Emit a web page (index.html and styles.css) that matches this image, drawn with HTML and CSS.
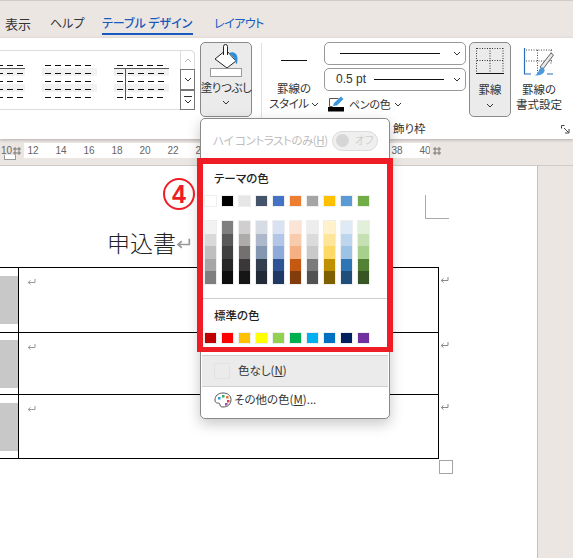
FILE: index.html
```html
<!DOCTYPE html>
<html lang="ja">
<head>
    <meta charset="UTF-8">
    <meta name="viewport" content="width=device-width, initial-scale=1.0">
    <title>テーブル デザイン</title>
    <link rel="stylesheet" href="styles.css">
</head>
<body>
    <svg class="defs" width="0" height="0">
        <symbol id="para" viewBox="0 0 9 9">
            <path d="M8 1v3.5H1.5M3.5 2.500L1.200 4.500l2.300 2" fill="none" stroke="currentColor" stroke-width="1"/>
        </symbol>
        <symbol id="chev" viewBox="0 0 8 5">
            <path d="M1 1l3 3 3-3" fill="none" stroke="currentColor" stroke-width="1"/>
        </symbol>
    </svg>

    <div class="tabs">
        <span class="tab tab-view">表示</span>
        <span class="tab tab-help">ヘルプ</span>
        <span class="tab tab-design">テーブル デザイン</span>
        <span class="tab tab-layout">レイアウト</span>
    </div>

    <div class="ribbon">
        <div class="tools">
            <div class="gallery">
                <svg class="gallery-art" width="180" height="58" viewBox="0 50 180 58">
                    <g fill="#f2f2f2">
                        <rect x="0" y="67" width="25" height="8"/><rect x="0" y="83" width="25" height="8"/>
                        <rect x="42" y="67" width="55" height="8"/><rect x="42" y="83" width="55" height="8"/>
                        <rect x="114" y="67" width="55" height="8"/><rect x="114" y="83" width="55" height="8"/>
                    </g>
                    <path d="M0 67.500h25M114 67.500h55M125.500 67v32" stroke="#555" fill="none"/>
                    <path d="M0 64.500h24M0 72.500h24M0 80.500h24M0 88.500h24M0 96.500h24" stroke="#111" stroke-dasharray="6 4" stroke-dashoffset="3" fill="none"/>
                    <path d="M45 64.500h50M45 72.500h50M45 80.500h50M45 88.500h50M45 96.500h50" stroke="#111" stroke-dasharray="6 4" fill="none"/>
                    <path d="M117 64.500h50M117 96.500h50M117 72.500h6M117 80.500h6M117 88.500h6M128 72.500h40M128 80.500h40M128 88.500h40" stroke="#111" stroke-dasharray="6 4" fill="none"/>
                </svg>
                <div class="scroller">
                    <div class="scroll-btn scroll-up"><svg class="chev"><use href="#chev"/></svg></div>
                    <div class="scroll-btn"><svg class="chev"><use href="#chev"/></svg></div>
                    <div class="scroll-btn scroll-more"><span class="more-bar"></span><svg class="chev"><use href="#chev"/></svg></div>
                </div>
            </div>

            <div class="big-btn big-fill is-open">
                <svg class="fill-icon" width="26" height="24" viewBox="0 0 26 24">
                    <path d="M2 15l11-9 10 11-9 7z" fill="#fff" stroke="#222" stroke-width="1"/>
                    <path d="M10.500 11V2.500a2 2 0 0 1 4 0V11" fill="#fff" stroke="#222" stroke-width="1"/>
                    <path d="M16 9c4-2 8 0 8.500 5 0 3-.3 6-1 6s-1-3-2-5c-1-2-3-4-5.500-6z" fill="#2f8fd8"/>
                </svg>
                <span class="fill-bar"></span>
                <span class="btn-label btn-label-tight">塗りつぶし</span>
                <svg class="chev"><use href="#chev"/></svg>
            </div>

            <div class="sep"></div>

            <div class="big-btn big-style">
                <span class="style-line"></span>
                <span class="btn-label">罫線の</span>
                <span class="btn-label btn-label-tight">スタイル <svg class="chev chev-inline"><use href="#chev"/></svg></span>
            </div>

            <div class="combos">
                <div class="combo"><span class="combo-line combo-line-long"></span><svg class="chev"><use href="#chev"/></svg></div>
                <div class="combo"><span class="combo-text">0.5 pt</span><span class="combo-line"></span><svg class="chev"><use href="#chev"/></svg></div>
                <div class="pen">
                    <svg width="17" height="16" viewBox="0 0 17 16">
                        <path d="M1.500 10.500v-8h9M1.500 10.500h3" fill="none" stroke="#555"/>
                        <path d="M5 10l1-3 7-6.500 2.500 2.500L9 9.500z" fill="#3b97de"/>
                        <rect x="0" y="11" width="16" height="4.500" fill="#000"/>
                    </svg>
                    <span class="btn-label pen-label">ペンの色</span>
                    <svg class="chev"><use href="#chev"/></svg>
                </div>
            </div>

            <div class="big-btn big-borders is-open">
                <svg class="borders-icon" width="28" height="28" viewBox="0 0 28 28">
                    <path d="M1 1.500h26M1 13.500h26M.5 1v25M14 1v25M27 1v25" stroke="#333" stroke-dasharray="1 1.500" fill="none"/>
                    <path d="M0 26.500h28" stroke="#111" stroke-width="1"/>
                </svg>
                <span class="btn-label">罫線</span>
                <svg class="chev"><use href="#chev"/></svg>
            </div>

            <div class="big-btn big-format">
                <svg class="format-icon" width="32" height="30" viewBox="0 0 32 30">
                    <path d="M3 3h27M3 14h27M14.500 3v24M28 3v14" stroke="#444" stroke-dasharray="1 1.500" fill="none"/>
                    <path d="M1.500 1v26H8M24 27h6" stroke="#2b6cb8" stroke-width="1.200" fill="none"/>
                    <path d="M17 20L28 6l2.500 2L20 22z" fill="#e8e8e8" stroke="#666" stroke-width="1"/>
                    <path d="M11 28c3 0 4-2 5-5 1-2 3-3 4.500-2 1.500 1 1.500 3 0 5-2 2-6 3-9.500 2z" fill="#4a9bdc"/>
                </svg>
                <span class="btn-label">罫線の</span>
                <span class="btn-label">書式設定</span>
            </div>
        </div>

        <div class="group-row">
            <span class="group-label">飾り枠</span>
            <svg class="launcher" width="9" height="9" viewBox="0 0 9 9">
                <path d="M.5 3.500V.5h3M3 3l4.500 4.500M8 4v4H4" fill="none" stroke="#444"/>
            </svg>
        </div>
    </div>

    <div class="ruler">
        <div class="ruler-left">
            <span class="ruler-num">10</span>
            <svg class="ruler-grid" width="8" height="8" viewBox="0 0 8 8">
                <path d="M2 0v8M6 0v8M0 2h8M0 6h8" stroke="#777" fill="none"/>
            </svg>
            <span class="tab-marker"></span>
        </div>
        <div class="ruler-strip">
            <div class="ruler-nums">
                <span class="ruler-num">12</span>
                <span class="ruler-num">14</span>
                <span class="ruler-num">16</span>
                <span class="ruler-num">18</span>
                <span class="ruler-num">20</span>
                <span class="ruler-num">22</span>
                <span class="ruler-num ruler-num-last">24</span>
                <span class="ruler-num">38</span>
                <span class="ruler-num">40</span>
            </div>
        </div>
        <svg class="ruler-grid ruler-grid-end" width="8" height="8" viewBox="0 0 8 8">
            <path d="M2 0v8M6 0v8M0 2h8M0 6h8" stroke="#777" fill="none"/>
        </svg>
    </div>

    <div class="workspace">
        <div class="page">
            <div class="crop-mark"></div>
            <div class="doc-title">
                <span>申込書</span><svg class="para para-big"><use href="#para"/></svg>
            </div>
            <div class="doc-table">
                <div class="doc-row doc-row-1">
                    <div class="row-head"><span class="row-fill"></span></div>
                    <div class="row-body"><svg class="para"><use href="#para"/></svg></div>
                    <div class="row-end"><svg class="para para-dark"><use href="#para"/></svg></div>
                </div>
                <div class="doc-row doc-row-2">
                    <div class="row-head"><span class="row-fill"></span></div>
                    <div class="row-body"><svg class="para"><use href="#para"/></svg></div>
                    <div class="row-end"><svg class="para para-dark"><use href="#para"/></svg></div>
                </div>
                <div class="doc-row doc-row-3">
                    <div class="row-head"><span class="row-fill"></span></div>
                    <div class="row-body"><svg class="para"><use href="#para"/></svg></div>
                    <div class="row-end"><svg class="para para-dark"><use href="#para"/></svg></div>
                </div>
            </div>
            <div class="resize-box"></div>
        </div>
        <div class="side"></div>
    </div>

    <div class="menu">
        <div class="contrast-row">
            <span class="contrast-text">ハイ コントラストのみ(<u>H</u>)</span>
            <span class="toggle"><span class="knob"></span><span class="toggle-text">オフ</span></span>
        </div>

        <div class="annot">
            <span class="annot-num">4</span>
            <div class="menu-head">テーマの色</div>
            <div class="swatches" id="themeColors"></div>
            <div class="shades" id="themeShades"></div>
            <div class="menu-line"></div>
            <div class="menu-head menu-head-std">標準の色</div>
            <div class="swatches swatches-std" id="standardColors"></div>
        </div>

        <div class="menu-line menu-line-a"></div>
        <div class="menu-item is-hover">
            <span class="no-color"></span>
            <span>色なし(<u>N</u>)</span>
        </div>
        <div class="menu-line"></div>
        <div class="menu-item menu-item-more">
            <svg class="palette" width="18" height="16" viewBox="0 0 18 16">
                <path d="M9 1C4 1 1 4 1 8c0 3 2 3 3 3s2 .5 2 2 1.500 2 3 2c5 0 8-3 8-7.500C17 3.500 13.500 1 9 1z" fill="#fff" stroke="#555"/>
                <rect x="4" y="5" width="2.500" height="2.500" fill="#2f9ed8"/>
                <rect x="8" y="3" width="2.500" height="2.500" fill="#35a868"/>
                <rect x="12" y="4" width="2.500" height="2.500" fill="#e8792f"/>
                <rect x="13" y="8" width="2.500" height="2.500" fill="#d8434f"/>
                <rect x="11" y="11" width="2.500" height="2.500" fill="#a04bb0"/>
            </svg>
            <span>その他の色(<u>M</u>)...</span>
        </div>
    </div>

    <script>
        const theme = ['#ffffff', '#000000', '#e7e6e6', '#44546a', '#4472c4', '#ed7d31', '#a5a5a5', '#ffc000', '#5b9bd5', '#70ad47'];
        const shades = [
            ['#f2f2f2', '#d9d9d9', '#bfbfbf', '#a6a6a6', '#7f7f7f'],
            ['#7f7f7f', '#595959', '#404040', '#262626', '#0d0d0d'],
            ['#d0cece', '#aeabab', '#757070', '#3a3838', '#171616'],
            ['#d6dce4', '#adb9ca', '#8497b0', '#333f4f', '#222a35'],
            ['#d9e2f3', '#b4c6e7', '#8eaadb', '#2f5496', '#1f3864'],
            ['#fbe4d5', '#f7cbac', '#f4b083', '#c55911', '#833c0b'],
            ['#ededed', '#dbdbdb', '#c9c9c9', '#7b7b7b', '#525252'],
            ['#fff2cc', '#fee599', '#ffd965', '#bf9000', '#7f6000'],
            ['#deeaf6', '#bdd6ee', '#9cc3e5', '#2e75b5', '#1e4e79'],
            ['#e2efd9', '#c5e0b3', '#a8d08d', '#538135', '#375623']
        ];
        const standard = ['#c00000', '#ff0000', '#ffc000', '#ffff00', '#92d050', '#00b050', '#00b0f0', '#0070c0', '#002060', '#7030a0'];

        function swatch(color) {
            return `<span class="swatch" style="background-color: ${color}"></span>`;
        }

        document.getElementById('themeColors').innerHTML = theme.map(swatch).join('');
        document.getElementById('standardColors').innerHTML = standard.map(swatch).join('');
        document.getElementById('themeShades').innerHTML = shades.map(col => `
            <div class="shade-col">${col.map(c => `<span class="shade" style="background-color: ${c}"></span>`).join('')}</div>
        `).join('');
    </script>
</body>
</html>
```

FILE: styles.css
```css
:root {
    --chrome: #ece6e3;
    --accent: #185abd;
    --line: #8a8a8a;
    --red: #ee1c25;
}

* {
    box-sizing: border-box;
    margin: 0;
    padding: 0;
}

html, body {
    height: 100%;
    overflow: hidden;
}

body {
    position: relative;
    display: flex;
    flex-direction: column;
    font-family: "Noto Sans CJK JP", "Noto Sans", sans-serif;
    font-size: 12px;
    line-height: 1.2;
    font-feature-settings: "palt";
    background-color: var(--chrome);
    color: #333;
}

.defs {
    position: absolute;
}

.chev {
    display: block;
    width: 8px;
    height: 5px;
    color: #333;
}

.chev-inline {
    display: inline-block;
    vertical-align: middle;
}

/* タブ */
.tabs {
    display: flex;
    height: 38px;
    padding-left: 5px;
    border-top: 1px solid #cfcbc9;
    align-items: flex-start;
}

.tab {
    padding-top: 15px;
    height: 34px;
    font-size: 12px;
    white-space: nowrap;
}

.tab-view { width: 45px; font-size: 13px; }
.tab-help { width: 52px; }

.tab-design {
    width: 91px;
    margin-right: 21px;
    font-weight: 500;
    color: var(--accent);
    border-bottom: 2px solid var(--accent);
}

.tab-layout {
    letter-spacing: -0.5px;
    color: var(--accent);
}

/* リボン */
.ribbon {
    height: 101px;
    background-color: white;
    box-shadow: 0 1px 3px rgba(0,0,0,0.25);
    position: relative;
}

.tools {
    display: flex;
    height: 80px;
    padding-top: 4px;
}

.gallery {
    display: flex;
    justify-content: space-between;
    width: 195px;
    height: 60px;
    margin-top: 8px;
    border: 1px solid #dcdcdc;
    border-left: none;
    border-radius: 0 5px 5px 0;
}

.scroller {
    width: 15px;
    margin: -1px -1px -1px 0;
    display: flex;
    flex-direction: column;
}

.scroll-btn {
    flex: 1;
    display: flex;
    flex-direction: column;
    align-items: center;
    justify-content: center;
    gap: 2px;
    border: 1px solid #777;
    margin-bottom: -1px;
    background-color: white;
}

.scroll-up {
    border-color: #dcdcdc;
    border-radius: 0 5px 0 0;
}

.scroll-up .chev {
    color: #bbb;
    transform: rotate(180deg);
}

.scroll-more {
    margin: 1px 0 0;
}

.more-bar {
    width: 8px;
    height: 1px;
    background-color: #333;
}

.big-btn {
    display: flex;
    flex-direction: column;
    align-items: center;
    height: 75px;
    border: 1px solid transparent;
    border-radius: 5px;
    white-space: nowrap;
}

.is-open {
    background-color: #ebebeb;
    border-color: var(--line);
}

.btn-label {
    font-size: 11.5px;
    line-height: 15px;
}

.btn-label-tight {
    letter-spacing: -0.4px;
}

.big-fill {
    width: 52px;
    margin-left: 5px;
}

.fill-icon {
    margin-top: 1px;
    flex: none;
}

.fill-bar {
    width: 32px;
    height: 9px;
    margin: 0 0 3px;
    background-color: white;
    border: 1px solid #999;
}

.big-fill .chev {
    margin-top: 5px;
}

.sep {
    width: 1px;
    height: 75px;
    margin: 1px 7px 0 9px;
    background-color: #e0e0e0;
}

.big-style {
    width: 50px;
}

.style-line {
    width: 26px;
    height: 1px;
    margin: 17px 0 20px;
    background-color: #111;
}

.combos {
    width: 142px;
    margin-left: 5px;
    display: flex;
    flex-direction: column;
    gap: 3px;
}

.combo {
    height: 23px;
    display: flex;
    align-items: center;
    padding: 0 3px 0 11px;
    border: 1px solid #999;
    border-radius: 5px;
}

.combo-line {
    flex: none;
    width: 70px;
    height: 1px;
    margin-left: 8px;
    background-color: #111;
}

.combo-line-long {
    width: 100px;
    margin-left: 4px;
}

.combo .chev {
    margin-left: auto;
    margin-right: 1px;
}

.combo-text {
    flex: none;
    font-family: "Liberation Sans", sans-serif;
    font-size: 12px;
    width: 30px;
    white-space: nowrap;
}

.pen {
    display: flex;
    align-items: center;
    gap: 4px;
    padding: 2px 0 0 4px;
}

.pen-label {
    font-size: 11px;
    letter-spacing: -0.3px;
    white-space: nowrap;
}

.big-borders {
    width: 42px;
    margin-left: 3px;
}

.borders-icon {
    margin-top: 4px;
    margin-bottom: 7px;
}

.big-borders .chev {
    margin-top: 6px;
}

.big-format {
    width: 48px;
    margin-left: 4px;
}

.format-icon {
    margin-top: 4px;
    margin-bottom: 5px;
}

.group-row {
    display: flex;
    align-items: center;
    height: 21px;
    padding-left: 393px;
}

.group-label {
    font-size: 11.5px;
}

.launcher {
    margin-left: auto;
    margin-right: 3px;
    margin-top: 1px;
}

/* 定規 */
.ruler {
    display: flex;
    align-items: center;
    height: 27px;
    padding-bottom: 7px;
    padding-top: 4px;
    border-bottom: 1px solid #cfcbc9;
}

.ruler-left {
    position: relative;
    display: flex;
    align-items: center;
    width: 24px;
    padding-left: 1px;
}

.tab-marker {
    position: absolute;
    left: 4px;
    top: 12px;
    width: 12px;
    height: 5px;
    border: 1px solid #999;
    border-top: none;
    background-color: white;
}

.ruler-strip {
    width: 406px;
    height: 15px;
    background-color: white;
    overflow: hidden;
}

.ruler-nums {
    display: flex;
    margin-left: -5px;
}

.ruler-num {
    flex: none;
    font-family: "Liberation Sans", sans-serif;
    font-size: 10px;
    line-height: 15px;
    color: #666;
}

.ruler-nums .ruler-num {
    width: 28px;
    text-align: center;
}

/* 26〜36 はメニューの下に隠れる */
.ruler-nums .ruler-num-last {
    margin-right: 168px;
}

.ruler-grid {
    margin-left: 1px;
}

.ruler-grid-end {
    margin-left: 3px;
}

/* 文書 */
.workspace {
    flex: 1;
    display: flex;
}

.page {
    width: 537px;
    padding-top: 29px;
    background-color: white;
}

.side {
    flex: 1;
    border-left: 1px solid #c4c0be;
}

.crop-mark {
    width: 24px;
    height: 24px;
    margin-left: 425px;
    border-left: 1px solid #aaa;
    border-bottom: 1px solid #aaa;
}

.doc-title {
    display: flex;
    align-items: center;
    height: 48px;
    padding: 0 0 0 107px;
    font-size: 23px;
    font-weight: 300;
    color: #222;
    font-feature-settings: normal;
}

.para {
    flex: none;
    display: block;
    width: 9px;
    height: 9px;
    margin: 10px 0 0 8px;
    color: #999;
}

.para-big {
    width: 15px;
    height: 15px;
    margin: 2px 0 0 0;
}

.para-dark {
    margin: 9px 0 0 1px;
    color: #888;
}

.doc-row {
    display: flex;
    width: 449px;
}

.doc-row-1 { height: 65px; }
.doc-row-2 { height: 62px; }
.doc-row-3 { height: 65px; }

.row-head,
.row-body {
    border-top: 1px solid #000;
}

.doc-row-3 .row-head,
.doc-row-3 .row-body {
    border-bottom: 1px solid #000;
}

.row-head {
    width: 19px;
    padding-top: 8px;
    border-right: 1px solid #000;
}

.doc-row-2 .row-head { padding-top: 7px; }

.row-fill {
    display: block;
    height: 48px;
    background-color: #c8c8c8;
}

.row-body {
    width: 421px;
    border-right: 1px solid #000;
}

.resize-box {
    width: 14px;
    height: 14px;
    margin: 1px 0 0 439px;
    border: 1px solid #a5a5a5;
}

/* 塗りつぶしメニュー */
.menu {
    position: absolute;
    left: 200px;
    top: 118px;
    width: 190px;
    height: 301px;
    background-color: white;
    border: 1px solid var(--line);
    border-radius: 5px;
    box-shadow: 0 5px 14px rgba(0,0,0,0.22);
}

.contrast-row {
    display: flex;
    align-items: center;
    justify-content: space-between;
    height: 39px;
    padding: 4px 11px 0 12px;
    font-size: 11.500px;
    color: #bdbdbd;
}

.contrast-text {
    white-space: nowrap;
    letter-spacing: -0.45px;
}

.toggle {
    flex: none;
    display: flex;
    align-items: center;
    width: 46px;
    height: 20px;
    padding-left: 3px;
    background-color: #efefef;
    border: 1px solid #dcdcdc;
    border-radius: 10px;
}

.knob {
    width: 13px;
    height: 13px;
    border-radius: 50%;
    background-color: #d6d6d6;
}

.toggle-text {
    margin-left: 6px;
    font-size: 10.500px;
    color: #cfcfcf;
}

.annot {
    position: relative;
    width: 196px;
    height: 194px;
    margin-left: -4px;
    padding: 0 0 0 1px;
    border: solid var(--red);
    border-width: 6px 6px 5px;
}

.annot-num {
    position: absolute;
    left: -40px;
    top: 14px;
    width: 32px;
    height: 32px;
    border: 2px solid var(--red);
    border-radius: 50%;
    font-family: "Liberation Sans", sans-serif;
    text-align: center;
    font-size: 25px;
    line-height: 28px;
    font-weight: 700;
    color: var(--red);
}

.menu-head {
    height: 16px;
    margin: 6px 0 0 10px;
    font-size: 11.500px;
    line-height: 16px;
    font-weight: 500;
    color: #222;
}

.menu-head-std {
    margin-top: 8px;
}

.swatches,
.shades {
    display: grid;
    grid-template-columns: repeat(10, 13px);
    column-gap: 4px;
    margin-top: 9px;
}

.shades {
    margin-top: 13px;
}

.swatch {
    height: 12px;
    border: 1px solid #eeeeee;
}

.shade-col {
    display: flex;
    flex-direction: column;
    border: 1px solid #eeeeee;
}

.shade {
    height: 12.600px;
}

.menu-line {
    height: 1px;
    margin: 0 1px;
    background-color: #cfcfcf;
}

.annot .menu-line {
    margin: 13px 0 0 -1px;
}

.menu-line-a {
    margin: 3px 1px 0;
}

.menu-item {
    display: flex;
    align-items: center;
    margin: 0 1px;
    font-size: 11.500px;
    color: #333;
}

.is-hover {
    height: 30px;
    padding-left: 12px;
    gap: 8px;
    background-color: #ebebeb;
}

.no-color {
    width: 16px;
    height: 16px;
    border: 1px solid #e2e2e2;
}

.menu-item-more {
    height: 27px;
    padding: 0 0 2px 12px;
    gap: 2px;
}
```
